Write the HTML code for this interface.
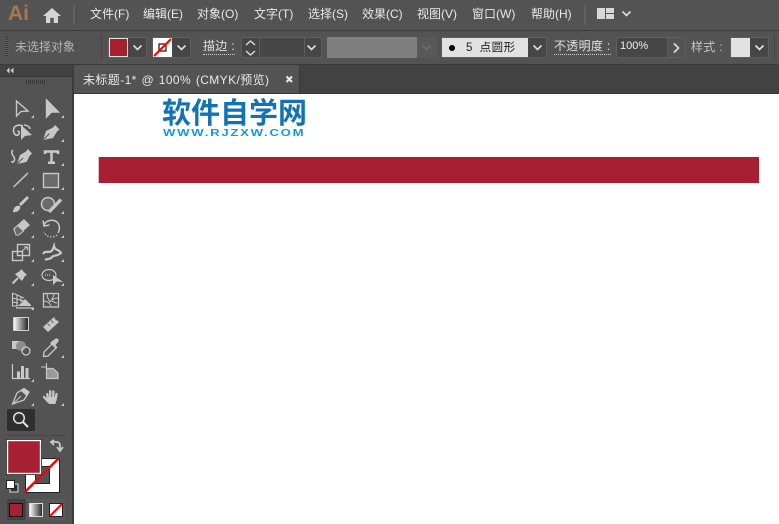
<!DOCTYPE html>
<html><head><meta charset="utf-8">
<style>
html,body{margin:0;padding:0;background:#535353}
#r{position:relative;width:779px;height:524px;overflow:hidden;background:#535353;font-family:"Liberation Sans","Noto Sans CJK SC",sans-serif;color:#e6e6e6;font-size:12px}
#r div,#r span,#r svg{position:absolute}
.m{top:6px;font-size:12px;line-height:16px;white-space:nowrap;color:#e8e8e8;letter-spacing:0}
.t{white-space:nowrap;line-height:16px}
.b{background:#464646;border:1px solid #5e5e5e;box-sizing:border-box;border-radius:2px}
.i{left:0;top:0}
</style></head><body><div id="r">
<!-- menu bar -->
<div style="left:0;top:0;width:779px;height:30px;background:#535353"></div>
<div style="left:0;top:30px;width:779px;height:1px;background:#3a3a3a"></div>
<div class="t" style="left:8px;top:2px;font-size:21px;line-height:24px;font-weight:bold;color:#a9774f">Ai</div>
<svg style="left:43px;top:8px" width="18" height="15" viewBox="0 0 18 16" preserveAspectRatio="none"><path d="M9 0L0 8.500H3V16H7.300V10.500H10.700V16H15V8.500H18Z" fill="#d5d5d5"/></svg>
<div style="left:73px;top:5px;width:2px;height:20px;background:#616161"></div>
<div class="m" style="left:90px">文件(F)</div>
<div class="m" style="left:143px">编辑(E)</div>
<div class="m" style="left:197px">对象(O)</div>
<div class="m" style="left:254px">文字(T)</div>
<div class="m" style="left:308px">选择(S)</div>
<div class="m" style="left:362px">效果(C)</div>
<div class="m" style="left:417px">视图(V)</div>
<div class="m" style="left:472px">窗口(W)</div>
<div class="m" style="left:531px">帮助(H)</div>
<div style="left:584px;top:5px;width:2px;height:20px;background:#616161"></div>
<div style="left:597px;top:8px;width:8px;height:11px;background:#d8d8d8"></div>
<div style="left:606px;top:8px;width:8px;height:5px;background:#d8d8d8"></div>
<div style="left:606px;top:14px;width:8px;height:5px;background:#d8d8d8"></div>
<svg style="left:621px;top:10px" width="11" height="8"><path d="M1.500 1.500L5.500 5.500L9.500 1.500" fill="none" stroke="#ddd" stroke-width="1.600"/></svg>

<!-- control bar -->
<div style="left:0;top:31px;width:779px;height:33px;background:#535353"></div>
<div style="left:5px;top:37px;width:3px;height:20px;background:repeating-linear-gradient(#3c3c3c 0 1px,#5c5c5c 1px 2px)"></div>
<div class="t" style="left:15px;top:39px;font-size:12px;color:#b4b4b4">未选择对象</div>
<div style="left:101px;top:35px;width:1px;height:24px;background:#444"></div>
<div class="b" style="left:108px;top:37px;width:39px;height:21px"></div>
<div style="left:109px;top:38px;width:19px;height:19px;background:#a6212f;border:1px solid #e4e4e4;box-sizing:border-box"></div>
<svg style="left:132px;top:44px" width="11" height="8"><path d="M1.500 1.500L5.500 5.500L9.500 1.500" fill="none" stroke="#e0e0e0" stroke-width="1.600"/></svg>
<div class="b" style="left:152px;top:37px;width:39px;height:21px"></div>
<svg style="left:153px;top:38px" width="19" height="19"><rect width="19" height="19" fill="#fff"/><rect x="6" y="6" width="7" height="7" fill="none" stroke="#222" stroke-width="1.300"/><path d="M1 18L18 1" stroke="#f00" stroke-width="2"/></svg>
<svg style="left:176px;top:44px" width="11" height="8"><path d="M1.500 1.500L5.500 5.500L9.500 1.500" fill="none" stroke="#e0e0e0" stroke-width="1.600"/></svg>
<div class="t" style="left:203px;top:39px;font-size:12px;color:#e0e0e0;letter-spacing:.3px;border-bottom:1px dotted #d0d0d0;line-height:15px;width:32px">描边 :</div>
<div class="b" style="left:241px;top:37px;width:81px;height:21px"></div>
<div style="left:259px;top:38px;width:44px;height:19px;background:#474747;border-left:1px solid #5e5e5e;border-right:1px solid #5e5e5e"></div>
<svg style="left:244px;top:39px" width="13" height="18"><path d="M2 6L6.500 2L11 6M2 12L6.500 16L11 12" fill="none" stroke="#ddd" stroke-width="1.400"/></svg>
<svg style="left:306px;top:44px" width="11" height="8"><path d="M1.500 1.500L5.500 5.500L9.500 1.500" fill="none" stroke="#e0e0e0" stroke-width="1.600"/></svg>
<div style="left:327px;top:37px;width:90px;height:21px;background:#7f7f7f"></div>
<div style="left:417px;top:37px;width:20px;height:21px;background:#585858"></div>
<svg style="left:421px;top:44px" width="11" height="8"><path d="M1.500 1.500L5.500 5.500L9.500 1.500" fill="none" stroke="#6e6e6e" stroke-width="1.600"/></svg>
<div class="b" style="left:441px;top:37px;width:106px;height:21px"></div>
<div style="left:442px;top:38px;width:86px;height:19px;background:#e2e2e2"></div>
<div style="left:449px;top:45px;width:6px;height:6px;border-radius:50%;background:#000"></div>
<div class="t" style="left:466px;top:40px;font-size:11.500px;color:#222;letter-spacing:.5px;word-spacing:3px">5 点圆形</div>
<svg style="left:532px;top:44px" width="11" height="8"><path d="M1.500 1.500L5.500 5.500L9.500 1.500" fill="none" stroke="#e0e0e0" stroke-width="1.600"/></svg>
<div class="t" style="left:554px;top:39px;font-size:12px;color:#e0e0e0;letter-spacing:.3px;border-bottom:1px dotted #d0d0d0;line-height:15px;width:57px">不透明度 :</div>
<div class="b" style="left:616px;top:37px;width:70px;height:21px"></div>
<div style="left:667px;top:38px;width:1px;height:19px;background:#5e5e5e"></div>
<div style="left:668px;top:38px;width:17px;height:19px;background:#535353"></div>
<div class="t" style="left:620px;top:38px;font-size:11px;color:#eee">100%</div>
<svg style="left:672px;top:42px" width="9" height="12"><path d="M2 1.500L6.500 6L2 10.500" fill="none" stroke="#e0e0e0" stroke-width="1.600"/></svg>
<div class="t" style="left:691px;top:39px;font-size:12px;color:#c4c4c4;letter-spacing:.3px">样式 :</div>
<div class="b" style="left:730px;top:37px;width:39px;height:21px"></div>
<div style="left:731px;top:38px;width:19px;height:19px;background:#e2e2e2"></div>
<svg style="left:754px;top:44px" width="11" height="8"><path d="M1.500 1.500L5.500 5.500L9.500 1.500" fill="none" stroke="#e8e8e8" stroke-width="1.600"/></svg>
<div style="left:774px;top:35px;width:1px;height:24px;background:#444"></div>

<!-- gutter -->
<div style="left:0;top:64px;width:779px;height:1px;background:#383838"></div>
<div style="left:72px;top:65px;width:707px;height:29px;background:#424242"></div>
<div style="left:72px;top:65px;width:2px;height:459px;background:#3c3c3c"></div>
<div style="left:74px;top:65px;width:225px;height:28px;background:#535353"></div>
<div style="left:299px;top:65px;width:1px;height:28px;background:#383838"></div>
<div style="left:74px;top:93px;width:705px;height:1px;background:#383838"></div>
<div class="t" style="left:83px;top:72px;font-size:12px;color:#e8e8e8;letter-spacing:.4px;word-spacing:1px">未标题-1* @ 100% (CMYK/预览)</div>
<svg style="left:285px;top:75px" width="9" height="9"><path d="M1.500 1.500L7 7M7 1.500L1.500 7" stroke="#eee" stroke-width="2"/></svg>

<!-- left panel header -->
<div style="left:0;top:65px;width:72px;height:11px;background:#424242"></div>
<div style="left:0;top:76px;width:72px;height:1px;background:#383838"></div>
<svg style="left:6px;top:67px" width="8" height="7"><path d="M3.500 0.500L0.500 3.500L3.500 6.500ZM7.500 0.500L4.500 3.500L7.500 6.500Z" fill="#cfcfcf"/></svg>
<div style="left:26px;top:80px;width:20px;height:4px;background:repeating-linear-gradient(90deg,#383838 0 1px,#555 1px 2px)"></div>

<!-- canvas -->
<div style="left:74px;top:94px;width:705px;height:430px;background:#fff"></div>
<div style="left:162px;top:95px;font-size:29px;line-height:32px;font-weight:bold;color:#1172b8;white-space:nowrap;letter-spacing:0;font-family:'Noto Sans CJK SC',sans-serif">软件自学网</div>
<div style="left:163px;top:127px;font-size:10.500px;line-height:12px;font-weight:bold;color:#129ae0;white-space:nowrap;letter-spacing:1.4px;transform:scaleX(1.25);transform-origin:0 0">WWW.RJZXW.COM</div>
<div style="left:98px;top:157px;width:661px;height:26px;background:#a62032"></div>
<div style="left:98px;top:157px;width:1px;height:26px;background:#e7b9bd"></div>

<!-- tools -->
<svg class="i" width="72" height="524" style="left:0;top:0" viewBox="0 0 72 524">
<defs><linearGradient id="g"><stop offset="0" stop-color="#fff"/><stop offset="1" stop-color="#222"/></linearGradient>
<linearGradient id="g2"><stop offset="0" stop-color="#fff"/><stop offset="1" stop-color="#222"/></linearGradient></defs>
<g fill="none" stroke="#c8c8c8" stroke-width="1.400">
<path d="M16.500 101V116L21 111.500L28 111Z"/>
<path d="M46.500 100V117L51.500 112L58.500 112Z" fill="#c8c8c8"/>
<path d="M23 126C18 124 13.500 126 13.500 130C13.500 134 16 136 18 135C20 134 19.500 131 17.500 131" stroke-width="1.600"/>
<path d="M24 125C27 125 30 127 30 129" stroke-width="1.400"/>
<path d="M21 125V140L25 136L32 135Z" fill="#c8c8c8" stroke="none"/>
<path d="M43 140L46 131L53 127.500L55 125L59.500 129.500L57 131.500L53 138Z" fill="#c8c8c8" stroke="none"/>
<path d="M43.500 139.500L49.500 133.500" stroke="#535353" stroke-width="1"/>
<path d="M13 150C10 153 13 155 14.500 158C15 161 12.500 164 11.500 161" stroke-width="1.500"/>
<path d="M17 164L20 155L26 151.500L28 149L32 153.500L30 155.500L26.500 162Z" fill="#c8c8c8" stroke="none"/>
<path d="M17.500 163.500L23 158" stroke="#535353" stroke-width="1"/>
<path d="M45 154V151.500H58V154M51.500 151V163M48 162.800H55" stroke-width="2.500"/>
<path d="M13.500 187L28 173" stroke-width="1.500"/>
<rect x="43.500" y="173.500" width="15" height="14" fill="#6b6b6b"/>
<path d="M13 212C13.500 207 16.500 205 20 206C21 209 18 213 13 212Z" fill="#c8c8c8" stroke="none"/>
<path d="M20 205L28 197" stroke-width="3"/>
<circle cx="48" cy="204" r="6.500" fill="#6b6b6b" stroke-width="1.500"/>
<path d="M49 212L61 199.500" stroke-width="3.400"/>
<path d="M13 229L24 219L30 225L19 235H16Z" fill="#c8c8c8" stroke="none"/>
<path d="M14 229L17.500 225.500L23.500 231L19 235H16Z" fill="#6a6a6a" stroke="#c8c8c8" stroke-width="1"/>
<path d="M44 225C46 220 53 219 57 222C60 225 60 230 58 233" stroke-width="1.500"/>
<path d="M43 220.500L44 226L49.500 225" stroke-width="1.500"/>
<path d="M57 235C53 238 47 238 44 232" stroke-dasharray="1.300 1.700" stroke-width="1.500"/>
<rect x="12.500" y="251.500" width="10" height="9"/><rect x="17.500" y="244.500" width="12" height="11"/>
<path d="M21 252L27 247M24 247H27.500V250.500" stroke-width="1.100"/>
<path d="M43 254C46 249 50 255 53 249L54 246C55 251 59 249 61 253C58 256 54 255 52 257C50 260 48 258 45 260" stroke-width="2.200"/>
<path d="M21 269L27 275L25 276L22 281L15 274L20 271Z" fill="#c8c8c8" stroke="none"/>
<path d="M12.500 283.500L18 278" stroke-width="2"/>
<ellipse cx="49" cy="275" rx="7" ry="5.500" stroke-width="1.200"/>
<path d="M53 275V285L56.500 281.500L63 282Z" fill="#c8c8c8" stroke="none"/>
<path d="M45 275H51" stroke-dasharray="1 1" stroke-width="1.200"/>
<path d="M12.500 293V306H18M12.500 293L24 298M12.500 298L24 301M12.500 302L18 303M17 295V306M21 297V302" stroke-width="1.100"/>
<path d="M18 306L25 299L31 305V306Z" fill="#c8c8c8" stroke="none"/>
<path d="M16 308H33" stroke-width="1.300"/>
<rect x="43.500" y="293.500" width="15" height="13.500" stroke-width="1.300"/>
<path d="M44 301C47 301 50 303 51 306M58 298C54 298 51 300 50 302M47 294C47 297 48 299 50 302M54 294C54 296 53 297 52 299M57 303C55 303 54 302 52 301" stroke-width="1"/>
<path d="M43 327L54 317L59 322L48 332Z" fill="#c8c8c8" stroke="none"/>
<path d="M47.500 323.500L50 326M51 320.500L53.500 323M54.500 318L57 320.500" stroke="#6a6a6a" stroke-width="1"/>
<rect x="12" y="341" width="8" height="8" fill="#c8c8c8" stroke="none"/>
<circle cx="21" cy="346" r="5" fill="#8d8d8d" stroke="none"/>
<circle cx="26" cy="351" r="4" stroke-width="1.300"/>
<path d="M43.500 356.500L44 352L52 344L56 348L48 356Z" stroke-width="1.300"/>
<path d="M51 342L55 339C57 337 60 340 58 342L55.500 345L57.500 347.500L56 348.500L50 343Z" fill="#c8c8c8" stroke="none"/>
<path d="M12.500 364V378.500H30" stroke-width="1.200"/>
<path d="M18.500 378V371.500M22.500 378V366M27 378V368" stroke-width="3"/>
<path d="M41 367H47M46.500 363V370" stroke-width="1.100"/>
<path d="M46.500 368.500H53L58 373V378.500H46.500Z" fill="#9a9a9a" stroke-width="1.200"/>
<path d="M12.500 404L17 393L24 388.500L29 392L24 400Z" stroke-width="1.300"/>
<path d="M13 404L21 396" stroke-width="1"/>
<path d="M21 391L24 388.500L29 392L26.500 396Z" fill="#c8c8c8" stroke="none"/>
<path d="M47.300 394L48 400M50.200 391.300V399M53.300 391.500V399M56.500 394L55.500 400" stroke-width="2.300" stroke-linecap="round"/>
<path d="M47 397H57L55.500 404H49Z" fill="#c8c8c8" stroke="none"/>
<path d="M44 397L48.500 402" stroke-width="2.300" stroke-linecap="round"/>
</g>
<!-- small arrows -->
<g fill="#c8c8c8">
<path d="M34 115V118H31Z"/><path d="M64 115V118H61Z"/>
<path d="M64 139V142H61Z"/>
<path d="M64 163V166H61Z"/>
<path d="M34 187V190H31Z"/><path d="M64 187V190H61Z"/>
<path d="M34 211V214H31Z"/><path d="M64 211V214H61Z"/>
<path d="M34 235V238H31Z"/><path d="M64 235V238H61Z"/>
<path d="M34 259V262H31Z"/><path d="M64 259V262H61Z"/>
<path d="M34 283V286H31Z"/><path d="M64 283V286H61Z"/>
<path d="M34 307V310H31Z"/>
<path d="M64 355V358H61Z"/>
<path d="M34 379V382H31Z"/>
<path d="M34 403V406H31Z"/><path d="M64 403V406H61Z"/>
</g>
<rect x="7" y="409" width="28" height="22" rx="2" fill="#2f2f2f"/>
<circle cx="19" cy="418" r="5.300" fill="none" stroke="#e4e4e4" stroke-width="1.500"/>
<path d="M23 422L28 427" stroke="#e4e4e4" stroke-width="2"/>
<rect x="13.500" y="317.500" width="15" height="13" fill="url(#g)" stroke="#d0d0d0"/>
<rect x="7" y="435" width="58" height="1" fill="#484848"/>
<!-- fill/stroke -->
<rect x="25.500" y="458.500" width="34" height="34" fill="#fff" stroke="#222"/>
<rect x="35.500" y="466.500" width="14" height="17" fill="#535353" stroke="#222"/>
<path d="M25 492L59 458" stroke="#f00" stroke-width="2.600"/>
<rect x="6.500" y="439.500" width="35" height="35" fill="#a62032" stroke="#222"/>
<rect x="7.500" y="440.500" width="33" height="33" fill="none" stroke="#fff" stroke-width="1.400"/>
<path d="M51 442H57C59 442 60 444 60 446V449M57 447L60 451L63 447M54 440L51 442L54 445" fill="none" stroke="#c8c8c8" stroke-width="1.800"/>
<rect x="10" y="484" width="8" height="8" fill="#333" stroke="#ddd" stroke-width="1"/>
<rect x="6.500" y="480.500" width="8" height="8" fill="#fff" stroke="#222"/>
<!-- mode row -->
<rect x="7" y="499" width="58" height="21" rx="2" fill="#5a5a5a"/>
<rect x="7" y="499" width="19" height="21" rx="2" fill="#424242"/>
<rect x="9.500" y="503.500" width="13" height="13" fill="#a62032" stroke="#111"/>
<rect x="29.500" y="503.500" width="13" height="13" fill="url(#g2)" stroke="#ddd"/>
<rect x="49.500" y="503.500" width="13" height="13" fill="#fff" stroke="#222"/>
<path d="M50 516L62 504" stroke="#f00" stroke-width="2"/>
</svg>
</div></body></html>
